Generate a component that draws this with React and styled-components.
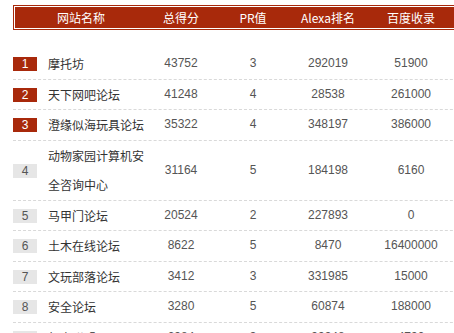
import React from "react";
import styled, { createGlobalStyle } from "styled-components";

const Global = createGlobalStyle`
  html, body { margin: 0; padding: 0; background: #fff; overflow: hidden; }
  body { font-family: "Liberation Sans", "Noto Sans CJK SC", sans-serif; font-size: 12px; }
`;

const RED = "#a8290b";

const Page = styled.div`
  padding: 5px 0 0 13px;
  width: 470px;
`;

const HeaderBar = styled.div`
  background: ${RED};
  padding: 1px;
`;

const HeaderInner = styled.div`
  border: 1px solid #fff;
  height: 21px;
  display: grid;
  grid-template-columns: 132px 68px 76px 74px 92px;
  align-items: center;
  color: #fff;
  font-family: "Noto Sans CJK SC", sans-serif;
  font-size: 12px;
  line-height: 21px;
`;

const HeadCell = styled.div`
  text-align: center;
  white-space: nowrap;
`;

const List = styled.div`
  margin-top: 19px;
`;

const Row = styled.div`
  display: grid;
  grid-template-columns: 35px 99px 68px 76px 74px 92px;
  align-items: center;
  border-bottom: 1px dashed #d9d9d9;
  color: #555;
  line-height: 29px;
`;

const Badge = styled.div`
  width: 24px;
  height: 14px;
  line-height: 14px;
  text-align: center;
  font-size: 12px;
  margin-top: 1px;
  background: ${(p) => (p.$top ? RED : "#e6e6e6")};
  color: ${(p) => (p.$top ? "#fff" : "#555")};
`;

const Name = styled.div`
  color: #333;
  font-family: "Noto Sans CJK SC", sans-serif;
  font-size: 12px;
  word-break: break-all;
  line-height: 29.5px;
`;

const Num = styled.div`
  text-align: center;
  font-size: 12px;
`;

const heads = ["网站名称", "总得分", "PR值", "Alexa排名", "百度收录"];

const rows = [
  ["摩托坊", "43752", "3", "292019", "51900"],
  ["天下网吧论坛", "41248", "4", "28538", "261000"],
  ["澄缘似海玩具论坛", "35322", "4", "348197", "386000"],
  ["动物家园计算机安全咨询中心", "31164", "5", "184198", "6160"],
  ["马甲门论坛", "20524", "2", "227893", "0"],
  ["土木在线论坛", "8622", "5", "8470", "16400000"],
  ["文玩部落论坛", "3412", "3", "331985", "15000"],
  ["安全论坛", "3280", "5", "60874", "188000"],
  ["红客联盟", "2984", "3", "99948", "4790"],
];

export default function App() {
  return (
    <>
      <Global />
      <Page>
        <HeaderBar>
          <HeaderInner>
            {heads.map((h) => (
              <HeadCell key={h}>{h}</HeadCell>
            ))}
          </HeaderInner>
        </HeaderBar>
        <List>
          {rows.map((r, i) => (
            <Row key={r[0]}>
              <Badge $top={i < 3}>{i + 1}</Badge>
              <Name>{r[0]}</Name>
              <Num>{r[1]}</Num>
              <Num>{r[2]}</Num>
              <Num>{r[3]}</Num>
              <Num>{r[4]}</Num>
            </Row>
          ))}
        </List>
      </Page>
    </>
  );
}
